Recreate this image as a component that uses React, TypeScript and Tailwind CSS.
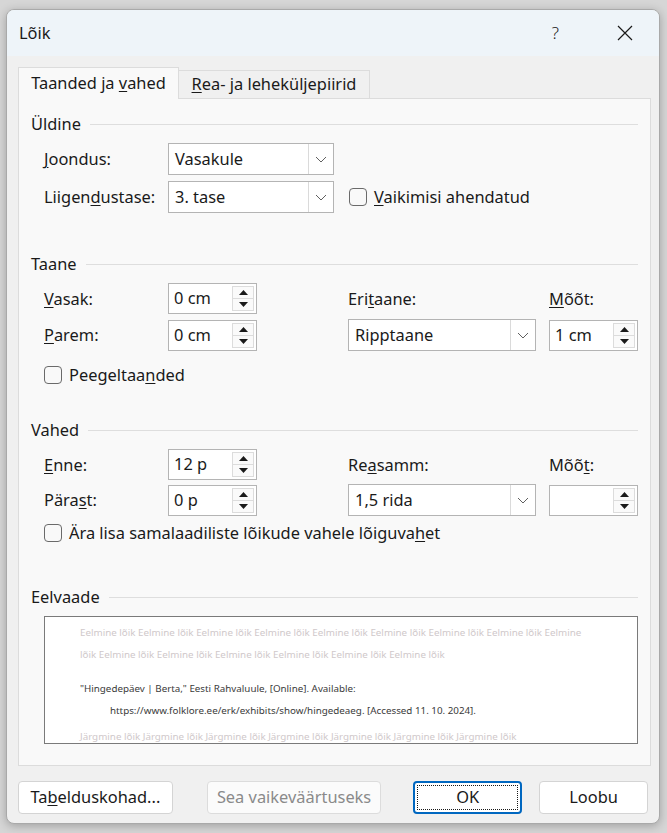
import React from "react";

const U = ({ children }: { children: React.ReactNode }) => (
  <span className="underline underline-offset-2 decoration-1">{children}</span>
);

const Chevron = () => (
  <svg width="12" height="7" viewBox="0 0 12 7" fill="none">
    <path d="M1 1l5 5 5-5" stroke="#606060" strokeWidth="1" />
  </svg>
);

const Dropdown = ({ value, w }: { value: string; w: string }) => (
  <div className={`flex h-[32px] ${w} border border-[#b4b4b4] bg-white`}>
    <div className="flex flex-1 items-center pl-[6px] text-[16.4px] text-[#1a1a1a]">{value}</div>
    <div className="flex w-[25px] items-center justify-center border-l border-[#dadada]">
      <Chevron />
    </div>
  </div>
);

const Spinner = ({ value }: { value: string }) => (
  <div className="flex h-[31px] w-[89px] border border-[#b4b4b4] bg-white">
    <div className="flex flex-1 items-center pl-[5px] text-[16.4px] text-[#1a1a1a]">{value}</div>
    <div className="my-[2px] mr-[2px] flex w-[22px] flex-col border border-[#dcdcdc] bg-[#fafafa]">
      <div className="flex flex-1 items-center justify-center border-b border-[#dcdcdc]">
        <svg width="9" height="5" viewBox="0 0 9 5">
          <path d="M0 5L4.5 0L9 5z" fill="#1a1a1a" />
        </svg>
      </div>
      <div className="flex flex-1 items-center justify-center">
        <svg width="9" height="5" viewBox="0 0 9 5">
          <path d="M0 0L4.5 5L9 0z" fill="#1a1a1a" />
        </svg>
      </div>
    </div>
  </div>
);

const Checkbox = ({ children }: { children: React.ReactNode }) => (
  <div className="flex h-[22px] items-center gap-[7px]">
    <div className="h-[18px] w-[18px] rounded-[4px] border border-[#6a6a6a] bg-[#f9f9f9]" />
    <span className="text-[16.4px] text-[#1a1a1a]">{children}</span>
  </div>
);

const Heading = ({ children }: { children: React.ReactNode }) => (
  <div className="flex h-[20px] items-center gap-[9px] pr-[12px]">
    <span className="text-[16.4px] leading-[20px] text-[#1a1a1a]">{children}</span>
    <div className="h-px flex-1 bg-[#dedede]" />
  </div>
);

const Label = ({ children }: { children: React.ReactNode }) => (
  <div className="flex items-center text-[16.4px] leading-[22px] text-[#1a1a1a]">
    <span>{children}</span>
  </div>
);

const eelmine = "Eelmine lõik ";
const jargmine = "Järgmine lõik ";

export default function App() {
  return (
    <div
      className="min-h-[833px] w-[667px] bg-[#d6d6d6] pl-[6px] pr-[7px] pt-[9px] pb-[10px]"
      style={{ fontFamily: '"Segoe UI", "Noto Sans", sans-serif' }}
    >
      <div className="overflow-hidden rounded-[8px] border border-[#a9a9a9] bg-[#f0f0f0] shadow-[0_2px_10px_rgba(0,0,0,0.25)]">
        {/* title bar */}
        <div className="flex h-[46px] items-center bg-[#eef4f9] pl-[12px] pr-[26px]">
          <span className="flex-1 text-[16.4px] text-[#1a1a1a]">Lõik</span>
          <span className="mr-[58px] text-[17px] font-light text-[#1a1a1a]">?</span>
          <svg width="16" height="16" viewBox="0 0 16 16">
            <path d="M1 1l14 14M15 1L1 15" stroke="#1a1a1a" strokeWidth="1.2" />
          </svg>
        </div>

        <div className="px-[11px] pt-[11px]">
          {/* tabs */}
          <div className="flex h-[31px] items-end">
            <div className="relative z-10 -mb-px flex h-[32px] w-[161px] items-center justify-center border border-b-0 border-[#dcdcdc] bg-[#f9f9f9] text-[16.4px] text-[#1a1a1a]">
              <span>
                Taanded ja <U>v</U>ahed
              </span>
            </div>
            <div className="flex h-[28px] w-[191px] items-center justify-center border border-b-0 border-l-0 border-[#dcdcdc] bg-[#f0f0f0] text-[16.4px] text-[#1a1a1a]">
              <span>
                <U>R</U>ea- ja leheküljepiirid
              </span>
            </div>
          </div>

          {/* panel */}
          <div className="h-[668px] w-[633px] border border-[#dcdcdc] bg-[#f9f9f9] pl-[12px] pt-[15px]">
            <Heading>Üldine</Heading>
            <div className="mt-[9px] grid grid-cols-[124px_181px_1fr] gap-y-[6px] pl-[13px]">
              <Label>
                <U>J</U>oondus:
              </Label>
              <Dropdown value="Vasakule" w="w-[166px]" />
              <div />
              <Label>
                Liigen<U>d</U>ustase:
              </Label>
              <Dropdown value="3. tase" w="w-[166px]" />
              <div className="flex items-center">
                <Checkbox>
                  <U>V</U>aikimisi ahendatud
                </Checkbox>
              </div>
            </div>

            <div className="mt-[41px]">
              <Heading>Taane</Heading>
            </div>
            <div className="mt-[9px] grid grid-cols-[124px_180px_201px_89px] gap-y-[5px] pl-[13px]">
              <Label>
                <U>V</U>asak:
              </Label>
              <Spinner value="0 cm" />
              <Label>
                Eri<U>t</U>aane:
              </Label>
              <Label>
                <U>M</U>õõt:
              </Label>
              <Label>
                <U>P</U>arem:
              </Label>
              <div className="flex items-end">
                <Spinner value="0 cm" />
              </div>
              <Dropdown value="Ripptaane" w="w-[188px]" />
              <div className="flex items-end">
                <Spinner value="1 cm" />
              </div>
            </div>
            <div className="mt-[13px] pl-[13px]">
              <Checkbox>
                Peegeltaa<U>n</U>ded
              </Checkbox>
            </div>

            <div className="mt-[34px]">
              <Heading>Vahed</Heading>
            </div>
            <div className="mt-[9px] grid grid-cols-[124px_180px_201px_89px] gap-y-[4px] pl-[13px]">
              <Label>
                <U>E</U>nne:
              </Label>
              <Spinner value="12 p" />
              <Label>
                Re<U>a</U>samm:
              </Label>
              <Label>
                Mõõ<U>t</U>:
              </Label>
              <Label>
                Pära<U>s</U>t:
              </Label>
              <div className="flex items-end">
                <Spinner value="0 p" />
              </div>
              <Dropdown value="1,5 rida" w="w-[188px]" />
              <div className="flex items-end">
                <Spinner value="" />
              </div>
            </div>
            <div className="mt-[6px] pl-[13px]">
              <Checkbox>
                Ära lisa samalaadiliste lõikude vahele lõiguva<U>h</U>et
              </Checkbox>
            </div>

            <div className="mt-[43px]">
              <Heading>Eelvaade</Heading>
            </div>
            <div className="ml-[13px] mt-[9px] h-[128px] w-[594px] overflow-hidden border border-[#7a7a7a] bg-white pl-[35px] pr-[30px] pt-[5px] text-[9.8px] leading-[22px]">
              <div className="text-[#cfc8ca]">
                {eelmine.repeat(8)}Eelmine
                <br />
                lõik {eelmine.repeat(6)}
              </div>
              <div className="mt-[12px] text-[#3a3a3a]">
                "Hingedepäev | Berta," Eesti Rahvaluule, [Online]. Available:
                <br />
                <span className="pl-[30px]">
                  https://www.folklore.ee/erk/exhibits/show/hingedeaeg. [Accessed 11. 10. 2024].
                </span>
              </div>
              <div className="mt-[4px] whitespace-nowrap text-[#cfc8ca]">{jargmine.repeat(7)}</div>
            </div>
          </div>

          {/* buttons */}
          <div className="flex items-center pb-[9px] pt-[15px]">
            <button className="h-[33px] w-[155px] rounded-[4px] border border-[#d4d4d4] bg-white text-[16.4px] text-[#1a1a1a]">
              Ta<U>b</U>elduskohad...
            </button>
            <button className="ml-[34px] h-[33px] w-[175px] rounded-[4px] border border-[#dcdcdc] bg-[#fbfbfb] text-[16.4px] text-[#8a8a8a]">
              Sea vaikeväärtuseks
            </button>
            <button className="ml-[32px] flex h-[33px] w-[109px] items-center justify-center rounded-[4px] border-2 border-[#0067c0] bg-white p-[2px]">
              <span className="flex h-full w-full items-center justify-center border border-dotted border-[#1a1a1a] text-[16.4px] text-[#1a1a1a]">
                OK
              </span>
            </button>
            <button className="ml-[17px] h-[33px] w-[109px] rounded-[4px] border border-[#d4d4d4] bg-white text-[16.4px] text-[#1a1a1a]">
              Loobu
            </button>
          </div>
        </div>
      </div>
    </div>
  );
}
